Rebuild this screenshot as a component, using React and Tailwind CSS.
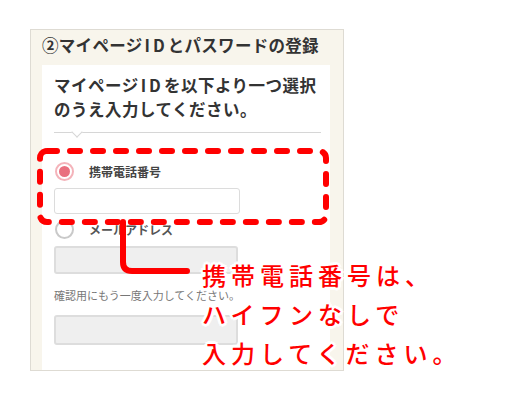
import React from 'react';

const jp = "font-['Noto_Sans_CJK_JP','Noto_Sans',sans-serif]";

const Radio = ({ checked }) => (
  <span
    className={`flex items-center justify-center w-[19px] h-[19px] rounded-full border-2 bg-white ${
      checked ? 'border-[#f4b3ba]' : 'border-[#c9c9c9]'
    }`}
  >
    {checked && <span className="w-[11px] h-[11px] rounded-full bg-[#e9707f]" />}
  </span>
);

const App = () => {
  return (
    <div className={`relative w-[506px] h-[403px] bg-white overflow-hidden ${jp}`}>
      {/* form panel */}
      <div className="absolute left-[30px] top-[29px] w-[314px] h-[342px] bg-[#f8f5ec] border border-[#dedbd3] overflow-hidden flex flex-col">
        <h2 className="pl-[11px] pt-[3px] h-[35px] text-[16.5px] leading-[24px] font-bold tracking-[0.3px] text-[#333]">
          ②マイページ<span className="tracking-[3px] ml-[2px]">ID</span>とパスワードの登録
        </h2>

        <div className="ml-[11px] w-[288px] flex-1 bg-white pl-[12px] pr-[9px] pt-[8px]">
          <p className="text-[16.5px] leading-[24px] font-bold tracking-[0.5px] text-[#333]">
            マイページ<span className="tracking-[3px] ml-[2px]">ID</span>を以下より一つ選択
            <br />
            のうえ入力してください。
          </p>

          {/* divider with caret */}
          <div className="relative mt-[11px] h-px bg-[#d6d6d6]">
            <span className="absolute left-[19px] top-0 w-[8px] h-[8px] bg-white border-r border-b border-[#d6d6d6] rotate-45 -translate-y-[4px]" />
          </div>

          <label className="mt-[29px] flex items-center gap-[15px] pl-[1px]">
            <Radio checked />
            <span className="text-[12px] font-bold text-[#444]">携帯電話番号</span>
          </label>
          <div className="mt-[7px] w-[186px] h-[26px] rounded-[3px] border border-[#dcdcdc] bg-white" />

          <label className="mt-[6px] flex items-center gap-[15px] pl-[1px]">
            <Radio />
            <span className="text-[12px] font-bold text-[#555]">メールアドレス</span>
          </label>
          <div className="mt-[7px] w-[184px] h-[28px] rounded-[3px] border-2 border-[#dddddd] bg-[#efefef]" />

          <p className="mt-[14px] text-[11px] leading-[14px] text-[#777]">確認用にもう一度入力してください。</p>
          <div className="mt-[13px] w-[184px] h-[30px] rounded-[3px] border-2 border-[#dddddd] bg-[#efefef]" />
        </div>
      </div>

      {/* red annotation */}
      <svg className="absolute inset-0 pointer-events-none" width="506" height="403" viewBox="0 0 506 403">
        <rect
          x="40"
          y="151"
          width="286"
          height="71"
          rx="7"
          fill="none"
          stroke="#ff0000"
          strokeWidth="6"
          strokeDasharray="10 13"
          strokeLinecap="round"
        />
        <path
          d="M123 222 V262 Q123 271 132 271 H187"
          fill="none"
          stroke="#ff0000"
          strokeWidth="6"
          strokeLinecap="round"
        />
      </svg>

      <div className="absolute left-[202px] top-[255px] text-[24px] leading-[39px] tracking-[5px] font-medium text-[#ff0000] whitespace-nowrap [text-shadow:2px_0_0_#fff,-2px_0_0_#fff,0_2px_0_#fff,0_-2px_0_#fff,2px_2px_0_#fff,-2px_-2px_0_#fff,2px_-2px_0_#fff,-2px_2px_0_#fff,3px_0_0_#fff,-3px_0_0_#fff,0_3px_0_#fff,0_-3px_0_#fff]">
        <div>携帯電話番号は、</div>
        <div>ハイフンなしで</div>
        <div>入力してください。</div>
      </div>
    </div>
  );
};

export default App;
